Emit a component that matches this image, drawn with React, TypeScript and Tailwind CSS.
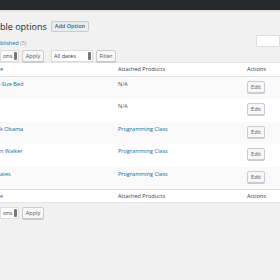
import type { ReactNode } from "react"

const font = { fontFamily: '"Open Sans", "Liberation Sans", sans-serif' }

function Btn({ children, className = "" }: { children: ReactNode; className?: string }) {
  return (
    <span
      className={`flex items-center justify-center h-[12px] border border-[#cccccc] bg-[#f7f7f7] rounded-[2px] text-[5.5px] text-[#555555] shadow-[0_1px_0_#cccccc] ${className}`}
    >
      {children}
    </span>
  )
}

function Select({ label, className = "" }: { label: string; className?: string }) {
  return (
    <span
      className={`flex items-center justify-between h-[12px] border border-[#dddddd] bg-white pl-[2px] pr-[1px] text-[5.5px] text-[#32373c] ${className}`}
    >
      {label}
      <span className="w-[3px] h-[8px] bg-[#777777] rounded-[1px]" />
    </span>
  )
}

const rows = [
  { name: "-Size Bed", product: "N/A", link: false },
  { name: "", product: "N/A", link: false },
  { name: "k Obama", product: "Programming Class", link: true },
  { name: "n Walker", product: "Programming Class", link: true },
  { name: "ates", product: "Programming Class", link: true },
]

export default function App() {
  return (
    <div className="w-[280px] h-[280px] overflow-hidden bg-[#f1f1f1]" style={font}>
      <div className="h-[10px] bg-[#23282d]" />
      <div className="h-[2px] bg-[#e5e5e5]" />

      <div className="flex items-center h-[12px] mt-[8px]">
        <h1 className="text-[9px] leading-none text-[#23282d]">ble options</h1>
        <span className="ml-[4px] flex items-center h-[11px] px-[3px] border border-[#cccccc] bg-[#ececec] rounded-[2px] text-[5.5px] font-semibold text-[#0073aa]">
          Add Option
        </span>
      </div>

      <div className="flex items-start justify-between mt-[3px] h-[15px]">
        <p className="mt-[6px] text-[5.5px] leading-none">
          <span className="text-[#0073aa]">blished</span> <span className="text-[#999999]">(5)</span>
        </p>
        <span className="w-[24px] h-[12px] border border-[#dddddd] bg-white" />
      </div>

      <div className="flex items-center h-[12px] gap-[3px]">
        <Select label="ons" className="w-[19px]" />
        <Btn className="w-[22px]">Apply</Btn>
        <Select label="All dates" className="ml-[4px] w-[42px]" />
        <Btn className="w-[20px]">Filter</Btn>
      </div>

      <div className="bg-white border-y border-[#e5e5e5] text-[5.5px]">
        <div className="flex items-center h-[14px] border-b border-[#e1e1e1] text-[#32373c]">
          <span className="w-[118px] text-[#0073aa]">e</span>
          <span className="w-[129px]">Attached Products</span>
          <span>Actions</span>
        </div>
        {rows.map((r, i) => (
          <div
            key={i}
            className={`flex items-start ${i % 2 === 0 ? "h-[22px] bg-[#f9f9f9]" : "h-[23px] bg-white"}`}
          >
            <span className="w-[118px] pt-[3px] text-[#0073aa]">{r.name}</span>
            <span className={`w-[129px] pt-[3px] ${r.link ? "text-[#0073aa]" : "text-[#555555]"}`}>{r.product}</span>
            <Btn className="mt-[4px] w-[18px]">Edit</Btn>
          </div>
        ))}
        <div className="flex items-center h-[13px] border-t border-[#e1e1e1] text-[#32373c]">
          <span className="w-[118px] text-[#0073aa]">e</span>
          <span className="w-[129px]">Attached Products</span>
          <span>Actions</span>
        </div>
      </div>

      <div className="flex items-center h-[12px] gap-[3px] mt-[4px]">
        <Select label="ons" className="w-[19px]" />
        <Btn className="w-[22px]">Apply</Btn>
      </div>
    </div>
  )
}
